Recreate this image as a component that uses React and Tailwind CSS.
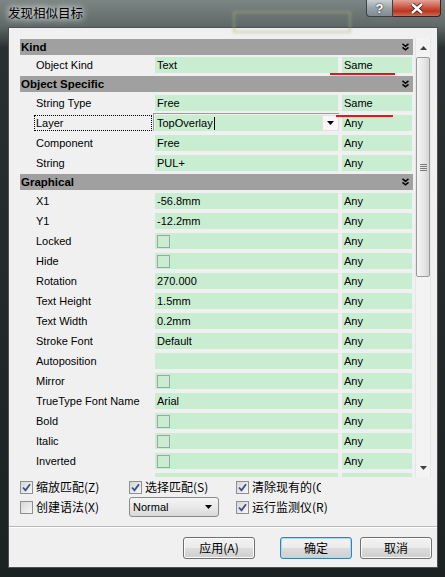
import React from "react";

const SANS = "font-['Liberation_Sans',Arial,sans-serif]";
const CJK = "font-['Noto_Sans_CJK_SC','Noto_Sans',sans-serif]";

const sections = [
  {
    title: "Kind",
    gap: "mb-[2px]",
    rows: [{ name: "Object Kind", value: "Text", match: "Same" }],
  },
  {
    title: "Object Specific",
    gap: "mb-[3px]",
    rows: [
      { name: "String Type", value: "Free", match: "Same" },
      { name: "Layer", value: "TopOverlay", match: "Any", combo: true },
      { name: "Component", value: "Free", match: "Any" },
      { name: "String", value: "PUL+", match: "Any" },
    ],
  },
  {
    title: "Graphical",
    gap: "mb-[3px]",
    rows: [
      { name: "X1", value: "-56.8mm", match: "Any" },
      { name: "Y1", value: "-12.2mm", match: "Any" },
      { name: "Locked", check: true, match: "Any" },
      { name: "Hide", check: true, match: "Any" },
      { name: "Rotation", value: "270.000", match: "Any" },
      { name: "Text Height", value: "1.5mm", match: "Any" },
      { name: "Text Width", value: "0.2mm", match: "Any" },
      { name: "Stroke Font", value: "Default", match: "Any" },
      { name: "Autoposition", value: "", match: "Any" },
      { name: "Mirror", check: true, match: "Any" },
      { name: "TrueType Font Name", value: "Arial", match: "Any" },
      { name: "Bold", check: true, match: "Any" },
      { name: "Italic", check: true, match: "Any" },
      { name: "Inverted", check: true, match: "Any" },
      { name: "", value: "", match: "" },
    ],
  },
];

function Chevrons() {
  return (
    <svg width="7" height="8" viewBox="0 0 7 8">
      <path d="M0.5 0.8L3.5 3.3L6.5 0.8M0.5 4.3L3.5 6.8L6.5 4.3" stroke="#000" strokeWidth="1.6" fill="none" />
    </svg>
  );
}

function SectionHeader({ title, gap }) {
  return (
    <div className={`flex h-4 items-center justify-between bg-[#a0a0a0] pl-[1px] pr-[4px] ${gap}`}>
      <span className="text-[11.5px] font-bold leading-4 text-black">{title}</span>
      <Chevrons />
    </div>
  );
}

function Row({ row, last }) {
  return (
    <div className={`flex h-4 text-[11px] leading-[14px] text-black ${last ? "mb-[3px]" : "mb-[4px]"}`}>
      <div className="w-[135px] pl-[14px]">
        <div
          className={`h-4 w-[118px] border pl-[1px] ${row.combo ? "border-dotted border-black" : "border-transparent"}`}
        >
          {row.name}
        </div>
      </div>
      <div className="relative flex h-4 w-[183px] items-center bg-[#c9edd1] pl-[2px]">
        {row.combo ? (
          <>
            <div className="pointer-events-none absolute -left-[2px] -top-[2px] right-[-1px] bottom-0 border-l border-t border-[#9a9a9a]" />
            <span className="leading-4">{row.value}</span>
            <span className="ml-[1px] h-[13px] w-px bg-black" />
            <div className="absolute right-[-1px] top-0 flex h-4 w-[17px] items-center justify-center border border-[#e2e2e2] bg-[#f7f7f7]">
              <svg width="7" height="4" viewBox="0 0 7 4">
                <path d="M0 0H7L3.5 4Z" fill="#000" />
              </svg>
            </div>
          </>
        ) : row.check ? (
          <span className="block h-[13px] w-[13px] border border-[#a3a3a3]" />
        ) : (
          <span className="leading-4">{row.value}</span>
        )}
      </div>
      <div className="ml-[4px] h-4 w-[70px] bg-[#c9edd1] pl-[2px] leading-4">{row.match}</div>
    </div>
  );
}

function Scrollbar() {
  return (
    <div className="flex h-full w-[16px] flex-col items-center border-x border-[#e6e6e6] bg-[#f3f3f3]">
      <div className="flex h-[19px] items-center justify-center">
        <svg width="7" height="4" viewBox="0 0 7 4">
          <path d="M0 4H7L3.5 0Z" fill="#404040" />
        </svg>
      </div>
      <div className="flex h-[220px] w-[14px] items-center justify-center rounded-[2px] border border-[#9a9a9a] bg-[linear-gradient(90deg,#f6f6f6,#e6e6e6_60%,#d4d4d4)]">
        <div className="flex flex-col gap-[1px]">
          <span className="block h-px w-[7px] bg-[#7a7a7a]" />
          <span className="block h-px w-[7px] bg-[#7a7a7a]" />
          <span className="block h-px w-[7px] bg-[#7a7a7a]" />
          <span className="block h-px w-[7px] bg-[#7a7a7a]" />
        </div>
      </div>
      <div className="flex-1" />
      <div className="flex h-[19px] items-center justify-center">
        <svg width="7" height="4" viewBox="0 0 7 4">
          <path d="M0 0H7L3.5 4Z" fill="#404040" />
        </svg>
      </div>
    </div>
  );
}

function WinCheck({ checked }) {
  return (
    <span className="relative flex h-[13px] w-[13px] shrink-0 items-center justify-center border border-[#8e8f8f] bg-[linear-gradient(135deg,#d6d6d6,#f7f7f7)]">
      {checked ? (
        <svg width="11" height="11" viewBox="0 0 11 11">
          <path d="M2 5.5L4.5 8.3L9 2.3" stroke="#3a4f8c" strokeWidth="1.8" fill="none" />
        </svg>
      ) : null}
    </span>
  );
}

function Option({ checked, label }) {
  return (
    <div className="flex items-center whitespace-nowrap">
      <WinCheck checked={checked} />
      <span className={`ml-[3px] text-[12px] leading-[14px] text-black ${CJK}`}>{label}</span>
    </div>
  );
}

function Button({ children, primary }) {
  return (
    <div
      className={`flex h-[22px] w-[72px] items-center justify-center rounded-[3px] border bg-[linear-gradient(180deg,#f3f3f3_0%,#ebebeb_48%,#dcdcdc_52%,#cfcfcf_100%)] text-[12px] text-black ${CJK} ${
        primary ? "border-[#3c7fb1] shadow-[inset_0_0_0_1px_#9fdcf6]" : "border-[#707070] shadow-[inset_0_0_0_1px_#fbfbfb]"
      }`}
    >
      {children}
    </div>
  );
}

export default function App() {
  return (
    <div className={`relative h-[577px] w-[445px] overflow-hidden bg-[linear-gradient(180deg,#7b8584_0px,#5f6968_26px,#2a3031_48px,#1c2122_577px)] ${SANS}`}>
      <div className="pointer-events-none absolute left-[233px] top-[11px] h-[22px] w-[118px] border-2 border-[#aab37a] opacity-50 blur-[1.5px]" />

      {/* title bar */}
      <div className="relative flex h-[27px] items-start justify-between pr-[4px]">
        <span className={`pl-[8px] pt-[4px] text-[12.5px] leading-[18px] text-black [text-shadow:0_0_6px_#fff,0_0_10px_#fff] ${CJK}`}>
          发现相似目标
        </span>
        <div className="flex">
          <div className="flex h-[17px] w-[27px] items-center justify-center rounded-bl-[4px] border border-t-0 border-[#3a4044] bg-[linear-gradient(180deg,#c9d0d4,#9aa4aa_50%,#7f8a91)] text-[13px] font-bold leading-none text-white [text-shadow:0_0_2px_#000]">
            ?
          </div>
          <div className="flex h-[17px] w-[48px] items-center justify-center rounded-br-[4px] border border-l-0 border-t-0 border-[#3a2020] bg-[linear-gradient(180deg,#e3a394,#c8503d_50%,#b83620_70%,#d06a50)]">
            <svg width="14" height="11" viewBox="0 0 14 11">
              <path d="M2 1L12 10M12 1L2 10" stroke="#3a1a14" strokeWidth="4" />
              <path d="M2 1L12 10M12 1L2 10" stroke="#fff" strokeWidth="2.4" />
            </svg>
          </div>
        </div>
      </div>

      {/* client area */}
      <div className="ml-[8px] flex h-[541px] w-[430px] flex-col border border-[#4a5253] bg-[#f0f0f0]">
        <div className="pl-[11px] pt-[10px]">
          <div className="flex h-[439px] gap-[2px]">
            <div className="h-full w-[393px] overflow-hidden pt-[1px]">
              {sections.map((section) => (
                <div key={section.title}>
                  <SectionHeader title={section.title} gap={section.gap} />
                  {section.rows.map((row, i) => (
                    <Row key={row.name + i} row={row} last={i === section.rows.length - 1} />
                  ))}
                </div>
              ))}
            </div>
            <Scrollbar />
          </div>

          <div className="mt-[3px] grid h-[14px] grid-cols-[109px_107px_1fr] items-center">
            <Option checked label="缩放匹配(Z)" />
            <Option checked label="选择匹配(S)" />
            <div className="w-[85px] overflow-hidden">
              <Option checked label="清除现有的(C)" />
            </div>
          </div>
          <div className="mt-[3px] grid h-[20px] grid-cols-[109px_107px_1fr] items-center">
            <Option label="创建语法(X)" />
            <div className="flex h-[20px] w-[90px] items-center justify-between rounded-[3px] border border-[#8a8a8a] bg-[linear-gradient(180deg,#f4f4f4,#e9e9e9_50%,#d9d9d9)] pl-[3px] pr-[6px] text-[11px] text-black">
              <span>Normal</span>
              <svg width="7" height="4" viewBox="0 0 7 4">
                <path d="M0 0H7L3.5 4Z" fill="#000" />
              </svg>
            </div>
            <Option checked label="运行监测仪(R)" />
          </div>
        </div>

        <div className="mt-[9px] h-px bg-[#b9b9b9]" />
        <div className="h-px bg-white" />

        <div className="flex justify-end pr-[5px] pt-[9px]">
          <Button>应用(A)</Button>
          <div className="ml-[25px]">
            <Button primary>确定</Button>
          </div>
          <div className="ml-[8px]">
            <Button>取消</Button>
          </div>
        </div>
      </div>

      {/* red review marks */}
      <div className="absolute left-[330px] top-[73px] h-[2px] w-[65px] bg-[#e8141a]" />
      <div className="absolute left-[336px] top-[115px] h-[2px] w-[57px] bg-[#e8141a]" />
    </div>
  );
}
